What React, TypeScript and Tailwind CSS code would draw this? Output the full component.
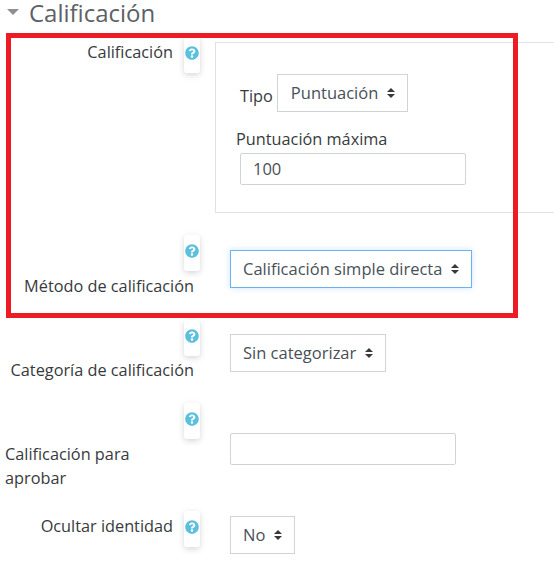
import { FaQuestionCircle } from "react-icons/fa";

function HelpTip() {
  return (
    <div className="flex h-[36px] w-[16px] shrink-0 justify-center rounded-[3px] bg-white pt-[9px] text-[14px] text-[#5bbfde] shadow-[0_2px_6px_rgba(0,0,0,0.16)]">
      <FaQuestionCircle />
    </div>
  );
}

function SelectBox({ label, focused = false, className = "pl-[12px]" }: { label: string; focused?: boolean; className?: string }) {
  return (
    <div
      className={`flex h-[38px] w-fit items-center gap-[9px] border pr-[12px] text-[16.5px] text-[#495057] ${className} ${
        focused ? "border-[#6cb2f2] shadow-[0_0_6px_rgba(108,178,242,0.35)]" : "border-[#ced4da]"
      }`}
    >
      <span>{label}</span>
      <svg width="8" height="12" viewBox="0 0 8 12" fill="#373a3c">
        <path d="M4 1 L8 5 H0 Z" />
        <path d="M4 11 L0 7 H8 Z" />
      </svg>
    </div>
  );
}

function TextBox({ value = "", className = "" }: { value?: string; className?: string }) {
  return (
    <div className={`flex h-[32px] w-[226px] items-center rounded-[2px] border border-[#ced4da] px-[12px] text-[16.5px] text-[#495057] ${className}`}>
      {value}
    </div>
  );
}

export default function App() {
  return (
    <div className="relative h-[570px] w-[554px] overflow-hidden bg-white font-['Open_Sans',sans-serif] text-[16.3px] leading-[24px] text-[#373a3c]">
      {/* Section heading */}
      <div className="flex h-[37px] items-start">
        <div className="ml-[7px] mt-[9px] h-0 w-0 border-x-[6px] border-t-[6px] border-x-transparent border-t-[#8f8f8f]" />
        <h3 className="ml-[10px] text-[24px] leading-[26px] text-[#5c6166]">Calificación</h3>
      </div>

      {/* Calificación */}
      <div className="flex">
        <div className="flex w-[200px] shrink-0 justify-end gap-[11px]">
          <span className="mt-[3px]">Calificación</span>
          <HelpTip />
        </div>
        <fieldset className="ml-[15px] mt-[5px] h-[171px] flex-1 border-y border-l border-[#dee2e6] pl-[20px]">
          <div className="mt-[31px] flex items-center gap-[4px] pl-[4px]">
            <span className="mt-[6px]">Tipo</span>
            <SelectBox label="Puntuación" className="pl-[13px]" />
          </div>
          <div className="mt-[15px]">Puntuación máxima</div>
          <TextBox value="100" className="ml-[4px] mt-[2px]" />
        </fieldset>
      </div>

      {/* Método de calificación */}
      <div className="mt-[22px] flex">
        <div className="flex w-[200px] shrink-0 flex-col items-end">
          <HelpTip />
          <span className="mr-[6px] mt-[3px]">Método de calificación</span>
        </div>
        <div className="ml-[30px] mt-[15px]">
          <SelectBox label="Calificación simple directa" focused />
        </div>
      </div>

      {/* Categoría de calificación */}
      <div className="mt-[22px] flex">
        <div className="flex w-[200px] shrink-0 flex-col items-end">
          <HelpTip />
          <span className="mr-[6px] mt-[2px]">Categoría de calificación</span>
        </div>
        <div className="ml-[30px] mt-[14px]">
          <SelectBox label="Sin categorizar" />
        </div>
      </div>

      {/* Calificación para aprobar */}
      <div className="mt-[21px] flex">
        <div className="flex w-[200px] shrink-0 flex-col">
          <div className="self-end">
            <HelpTip />
          </div>
          <span className="ml-[5px] mt-[3px] w-[150px]">Calificación para aprobar</span>
        </div>
        <div className="ml-[30px] mt-[30px]">
          <TextBox />
        </div>
      </div>

      {/* Ocultar identidad */}
      <div className="mt-[21px] flex">
        <div className="flex w-[200px] shrink-0 justify-end gap-[11px]">
          <span className="mt-[3px]">Ocultar identidad</span>
          <HelpTip />
        </div>
        <div className="ml-[30px] mt-[5px]">
          <SelectBox label="No" />
        </div>
      </div>

      {/* Red annotation drawn over the form */}
      <div className="pointer-events-none absolute left-[6px] top-[33px] h-[285px] w-[512px] border-[5px] border-[#ed1c24]" />
    </div>
  );
}
